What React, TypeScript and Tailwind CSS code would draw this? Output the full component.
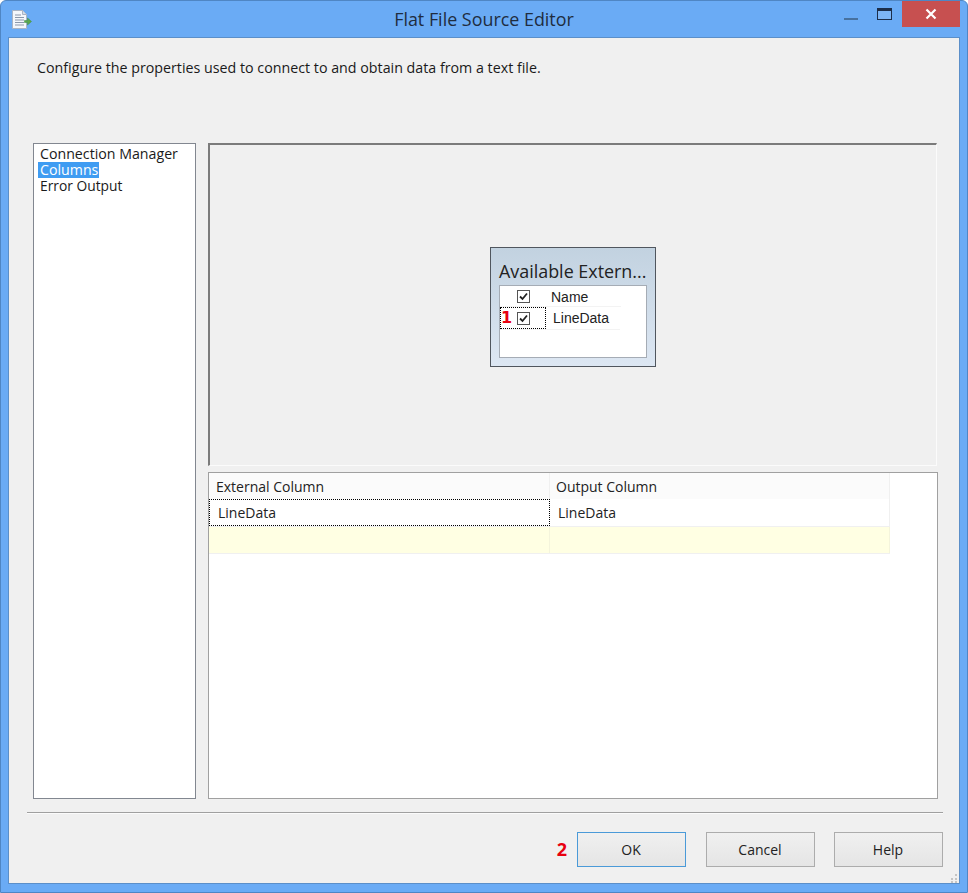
import React from "react";

const font = "font-['Open_Sans','Noto_Sans',sans-serif]";

function DocIcon() {
  return (
    <svg width="22" height="22" viewBox="0 0 22 22">
      <path d="M1.500 1.500h10l4 4v14h-14z" fill="#f4f7fb" stroke="#aab4c4" />
      <path d="M11.500 1.500v4h4" fill="#d5dde8" stroke="#aab4c4" />
      <path d="M4 6h6M4 8.500h9M4 11h9M4 13.500h9M4 16h9" stroke="#8b98ab" strokeWidth="1.200" />
      <path d="M13.500 11.500h3V9l4 3.500-4 3.500v-2.500h-3z" fill="#5aa84a" stroke="#3f8a45" strokeWidth="0.500" />
    </svg>
  );
}

function Check() {
  return (
    <div className="flex h-[13px] w-[13px] items-center justify-center border border-[#555] bg-white">
      <svg width="9" height="9" viewBox="0 0 9 9">
        <path d="M1 4.500l2.500 2.500L8 1.500" fill="none" stroke="#222" strokeWidth="1.800" />
      </svg>
    </div>
  );
}

function GridCell({ text, className }: { text: string; className: string }) {
  return <div className={`flex items-center text-[14px] text-[#222] ${className}`}>{text}</div>;
}

function ActionButton({ label, active }: { label: string; active?: boolean }) {
  return (
    <button
      className={`h-[35px] w-[109px] border bg-gradient-to-b from-[#f0f0f0] to-[#e5e5e5] pr-[1px] text-[14px] text-[#222] ${
        active ? "border-[#4a9ad8]" : "border-[#acacac]"
      }`}
    >
      {label}
    </button>
  );
}

export default function App() {
  return (
    <div className={`flex h-[893px] w-[968px] flex-col overflow-hidden rounded-t-[6px] border border-[#4f86c4] bg-[#6aabf5] ${font}`}>
      {/* title bar */}
      <div className="relative flex h-[36px] shrink-0 items-center justify-center">
        <div className="absolute left-[10px] top-[8px]">
          <DocIcon />
        </div>
        <span className="text-[17.900px] leading-[24px] text-[#1f2d40]">Flat File Source Editor</span>
        <div className="absolute right-[7px] top-0 flex items-start">
          <div className="mr-[19px] mt-[17px] h-[2px] w-[14px] bg-[#47719f]" />
          <div className="mr-[10px] mt-[7px] h-[12px] w-[15px] border border-[#1c2e4a] border-t-[3px] bg-[#7db5f5]" />
          <div className="flex h-[26px] w-[58px] items-center justify-center bg-[#c75050]">
            <svg width="12" height="12" viewBox="0 0 12 12">
              <path d="M1.500 1.500l9 9M10.500 1.500l-9 9" stroke="#fff" strokeWidth="2.200" />
            </svg>
          </div>
        </div>
      </div>

      {/* client area */}
      <div className="relative mx-[7px] flex h-[847px] flex-col border border-[#5b8fc9] bg-[#f0f0f0] pt-[20px]">
        <p className="ml-[28px] h-[85px] text-[14.250px] leading-[20px] text-[#1a1a1a]">
          Configure the properties used to connect to and obtain data from a text file.
        </p>

        <div className="ml-[24px] flex h-[656px]">
          {/* left nav */}
          <div className="mr-[12px] w-[163px] border border-[#828790] bg-white pl-[4px] pt-[2px] text-[14.200px] leading-[16px] text-[#1a1a1a]">
            <div className="pl-[2px]">Connection Manager</div>
            <div className="w-[61px] bg-[#3f9cf2] px-[2px] text-white">Columns</div>
            <div className="pl-[2px] text-[13.800px]">Error Output</div>
          </div>

          <div className="flex w-[730px] flex-col">
            {/* designer panel */}
            <div className="flex h-[323px] w-[729px] items-center justify-center border-l-2 border-t-2 border-[#7b7b7b] border-b-[#fbfbfb] border-r-[#fbfbfb] pt-[4px] [border-bottom-width:1px] [border-right-width:1px]">
              <div className="h-[120px] w-[166px] border border-[#50565e] bg-gradient-to-b from-[#c2d2e0] to-[#dde7f3] px-[8px] pt-[11px]">
                <div className="h-[26px] whitespace-nowrap text-[17.900px] leading-[24px] text-[#222]">Available Extern...</div>
                <div className="h-[73px] w-[148px] border border-[#a5acb5] bg-white font-['Liberation_Sans',sans-serif] text-[14px] text-[#222]">
                  <div className="flex h-[21px] w-[121px] border-b border-[#f3f3f3]">
                    <div className="flex w-[46px] items-center justify-center pl-[1px]">
                      <Check />
                    </div>
                    <div className="flex items-center pl-[5px] pt-[2px]">Name</div>
                  </div>
                  <div className="flex h-[23px] w-[120px] border-b border-[#f3f3f3]">
                    <div className="flex w-[46px] items-center border border-dotted border-black">
                      <span className="w-[16px] font-['DejaVu_Sans',sans-serif] text-[16px] font-bold leading-[20px] text-[#e8000f]">1</span>
                      <Check />
                    </div>
                    <div className="flex items-center pl-[7px]">LineData</div>
                  </div>
                </div>
              </div>
            </div>

            {/* column grid */}
            <div className="mt-[6px] h-[327px] w-[730px] border border-[#a0a0a0] bg-white">
              <div className="flex h-[26px] w-[681px] bg-[#fbfbfb]">
                <GridCell text="External Column" className="w-[341px] border-r border-[#f0f0f0] pl-[7px]" />
                <GridCell text="Output Column" className="w-[340px] border-r border-[#f0f0f0] pl-[6px]" />
              </div>
              <div className="flex h-[28px] w-[681px] border-b border-[#f0f0f0]">
                <GridCell text="LineData" className="w-[341px] border border-dotted border-black pl-[8px]" />
                <GridCell text="LineData" className="w-[340px] border-r border-[#f0f0f0] pl-[8px]" />
              </div>
              <div className="flex h-[27px] w-[681px] border-b border-[#f0f0f0] bg-[#ffffe3]">
                <div className="w-[341px] border-r border-[#f4f4dc]" />
                <div className="w-[340px] border-r border-[#f4f4dc]" />
              </div>
            </div>
          </div>
        </div>

        {/* separator */}
        <div className="ml-[18px] mt-[13px] h-[2px] w-[916px] border-t border-[#a0a0a0] bg-[#fbfbfb]" />

        {/* buttons */}
        <div className="mt-[18px] flex w-[934px] justify-end gap-[19px]">
          <div className="mr-[1px] flex items-center gap-[10px]">
            <span className="pb-[2px] text-[18px] font-bold leading-[24px] text-[#e8000f]">2</span>
            <ActionButton label="OK" active />
          </div>
          <ActionButton label="Cancel" />
          <ActionButton label="Help" />
        </div>

        {/* resize grip */}
        <svg className="absolute bottom-0 right-0" width="10" height="10" viewBox="0 0 10 10">
          <path d="M6 1h2v2H6zM6 5h2v2H6zM2 5h2v2H2zM6 8h2v2H6zM2 8h2v2H2z" fill="#c4c4c4" />
        </svg>
      </div>
    </div>
  );
}
